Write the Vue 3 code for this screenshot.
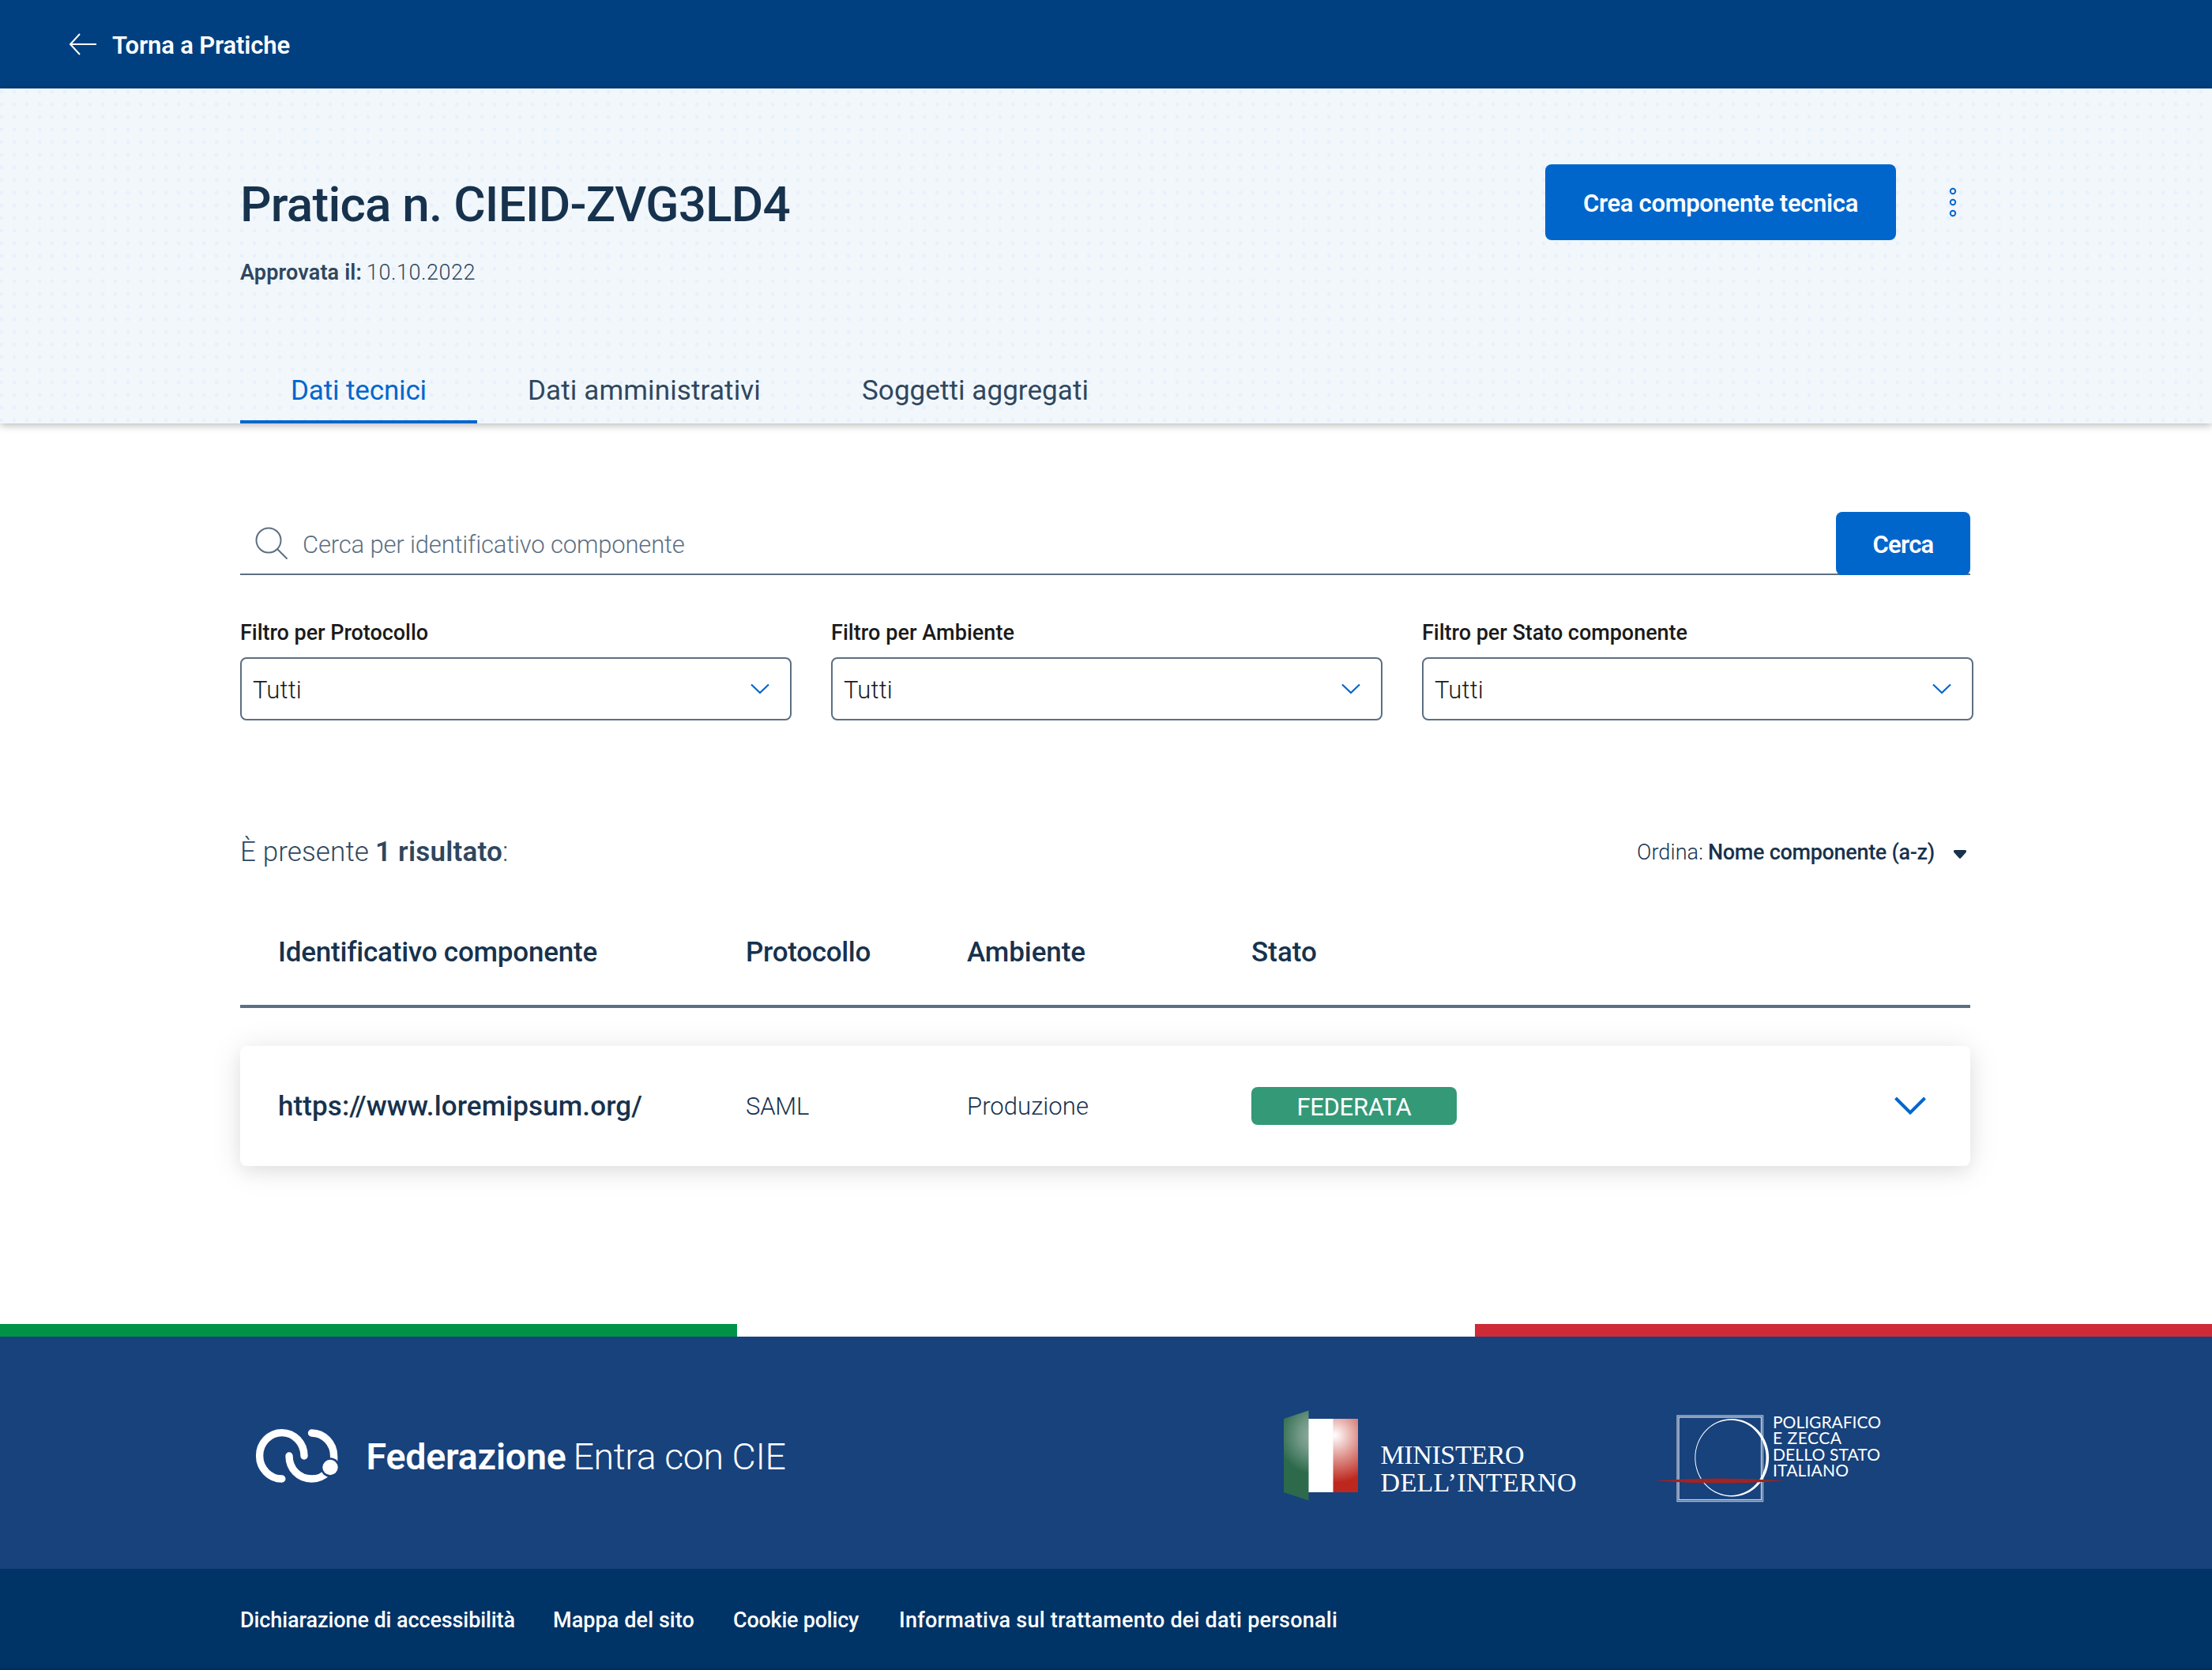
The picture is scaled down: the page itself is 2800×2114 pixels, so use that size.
<script setup>
const tabs = [
  { label: 'Dati tecnici', width: 172, active: true },
  { label: 'Dati amministrativi', width: 295 },
  { label: 'Soggetti aggregati', width: 287 },
]
const filters = [
  { label: 'Filtro per Protocollo', width: 238 },
  { label: 'Filtro per Ambiente', width: 232 },
  { label: 'Filtro per Stato componente', width: 336 },
]
const columns = [
  { label: 'Identificativo componente', width: 403 },
  { label: 'Protocollo', width: 158 },
  { label: 'Ambiente', width: 150 },
  { label: 'Stato', width: 83 },
]
const links = [
  { label: 'Dichiarazione di accessibilità', width: 348, gap: 48 },
  { label: 'Mappa del sito', width: 179, gap: 49 },
  { label: 'Cookie policy', width: 159, gap: 51 },
  { label: 'Informativa sul trattamento dei dati personali', width: 555, gap: 0 },
]

// Tracks a text so that it fills the given width: measured at two spacings, then solved linearly.
const vFit = {
  mounted(el, { value }) {
    el.style.display = 'inline-block'
    el.style.whiteSpace = 'nowrap'
    el.style.letterSpacing = '0px'
    const base = el.getBoundingClientRect().width
    el.style.letterSpacing = '1px'
    const step = el.getBoundingClientRect().width - base
    el.style.letterSpacing = `${(value - base) / step}px`
  },
}
</script>

<template>
  <div class="page">
    <nav class="topbar">
      <svg class="arrow" width="36" height="28" viewBox="0 0 36 28">
        <path d="M14 1 2 14 14 27M2 14H35" />
      </svg>
      <span v-fit="225">Torna a Pratiche</span>
    </nav>

    <header class="hero">
      <div class="hero-row">
        <div>
          <h1><span v-fit="696">Pratica n. CIEID-ZVG3LD4</span></h1>
          <p class="approved">
            <b v-fit="154">Approvata il:</b>
            <span v-fit="138">10.10.2022</span>
          </p>
        </div>
        <div class="actions">
          <button class="primary create"><span v-fit="348">Crea componente tecnica</span></button>
          <svg width="44" height="40" viewBox="0 0 44 40" class="dots">
            <circle cx="22" cy="6" r="3.2" />
            <circle cx="22" cy="20" r="3.2" />
            <circle cx="22" cy="34" r="3.2" />
          </svg>
        </div>
      </div>
      <div class="tabs">
        <div v-for="t in tabs" :key="t.label" class="tab" :class="{ active: t.active }">
          <span v-fit="t.width">{{ t.label }}</span>
        </div>
      </div>
    </header>

    <main class="content">
      <div class="search">
        <svg width="44" height="44" viewBox="0 0 44 44" class="lens">
          <circle cx="18" cy="18" r="15.5" />
          <path d="M29 29 41.5 41.5" />
        </svg>
        <span class="placeholder"><span v-fit="483">Cerca per identificativo componente</span></span>
        <button class="primary find"><span v-fit="77">Cerca</span></button>
      </div>

      <div class="filters">
        <div v-for="f in filters" :key="f.label" class="filter">
          <label><span v-fit="f.width">{{ f.label }}</span></label>
          <div class="select">
            <span v-fit="62">Tutti</span>
            <svg width="24" height="14" viewBox="0 0 24 14"><path d="M1 1.5 12 12 23 1.5" /></svg>
          </div>
        </div>
      </div>

      <div class="summary">
        <p class="count"><span v-fit="163">È presente</span><b v-fit="161">1 risultato</b>:</p>
        <p class="sort">
          <span v-fit="84">Ordina:</span><b v-fit="287">Nome componente (a-z)</b>
          <svg width="18" height="12" viewBox="0 0 18 12"><path d="M2 0H16Q18 1.2 16.6 3L9.9 10.4Q9 11.2 8.1 10.4L1.4 3Q0 1.2 2 0Z" /></svg>
        </p>
      </div>

      <div class="grid head">
        <div v-for="c in columns" :key="c.label"><span v-fit="c.width">{{ c.label }}</span></div>
      </div>

      <div class="grid card">
        <div class="url"><span v-fit="461">https:<i>/</i>/www.loremipsum.org/</span></div>
        <div><span v-fit="80">SAML</span></div>
        <div><span v-fit="154">Produzione</span></div>
        <div><div class="badge"><span v-fit="145">FEDERATA</span></div></div>
        <svg width="40" height="24" viewBox="0 0 40 24" class="expand"><path d="M1.5 2 20 20.5 38.5 2" /></svg>
      </div>
    </main>

    <footer>
      <div class="flag"><i class="green"></i><i></i><i class="red"></i></div>
      <div class="brands">
        <svg width="106" height="72" viewBox="0 0 106 72" class="cie">
          <g fill="none" stroke="#fff" stroke-width="9.4" stroke-linecap="round">
            <path d="M62 36A28.2 29.2 0 1 0 33.8 65" />
            <path d="M43 36C43 52 55 65 71.500 65Q84 65 92 56" />
            <path d="M71.500 7A28.400 29.200 0 0 1 99.600 36V44" />
          </g>
          <circle cx="95" cy="50.500" r="12.200" fill="#17427c" />
          <circle cx="95" cy="50.500" r="9.700" fill="#fff" />
        </svg>
        <p class="brand"><b v-fit="253">Federazione</b><span v-fit="269">Entra con CIE</span></p>

        <svg width="374" height="118" viewBox="0 0 374 118" class="interno">
          <defs>
            <radialGradient id="glow-green" gradientUnits="userSpaceOnUse" cx="42" cy="32" r="50">
              <stop offset="0" stop-color="#9cb5a9" />
              <stop offset=".45" stop-color="#719886" />
              <stop offset="1" stop-color="#2d6a4b" />
            </radialGradient>
            <radialGradient id="glow-red" gradientUnits="userSpaceOnUse" cx="65" cy="32" r="60">
              <stop offset="0" stop-color="#fff" />
              <stop offset=".5" stop-color="#dd8f89" />
              <stop offset="1" stop-color="#bd271d" />
            </radialGradient>
          </defs>
          <path d="M31 11H94V104H31Z" fill="#fff" />
          <path d="M62.500 11H94V104H62.500Z" fill="url(#glow-red)" />
          <path d="M0 11 31.500 .5V114.500L0 104Z" fill="url(#glow-green)" />
          <g class="serif">
            <text x="122.500" y="67.500" textLength="182" lengthAdjust="spacing">MINISTERO</text>
            <text x="122.500" y="103" textLength="248" lengthAdjust="spacing">DELL’INTERNO</text>
          </g>
        </svg>

        <svg width="290" height="112" viewBox="0 0 290 112" class="ipzs">
          <g fill="none" stroke="#fff">
            <rect x="28" y="2" width="108.500" height="108.500" stroke-width="1.500" stroke-opacity=".6" />
            <rect x="30" y="4" width="104.500" height="104.500" stroke-width="1.300" stroke-opacity=".8" />
          </g>
          <path fill="#fff" fill-rule="evenodd" d="M50.300 55.300A46.900 49.300 0 1 1 144.100 55.300A46.900 49.300 0 1 1 50.300 55.300ZM51.300 55.300A44.600 47.600 0 1 0 140.500 55.300A44.600 47.600 0 1 0 51.300 55.300Z" />
          <path d="M0 84.500Q82 78.500 164 84.500Q82 90.500 0 84.500Z" fill="#9f2424" />
          <g class="humanist">
            <text x="149" y="18" textLength="137" lengthAdjust="spacing">POLIGRAFICO</text>
            <text x="149" y="38.200" textLength="87" lengthAdjust="spacing">E ZECCA</text>
            <text x="149" y="58.600" textLength="136" lengthAdjust="spacing">DELLO STATO</text>
            <text x="149" y="79" textLength="96" lengthAdjust="spacing">ITALIANO</text>
          </g>
        </svg>
      </div>
      <div class="links">
        <a v-for="l in links" :key="l.label" :style="{ marginRight: l.gap + 'px' }"><span v-fit="l.width">{{ l.label }}</span></a>
      </div>
    </footer>
  </div>
</template>

<style>
body { margin: 0; background: #fff; }
</style>

<style scoped>
.page {
  width: 2800px;
  height: 2114px;
  overflow: hidden;
  display: flex;
  flex-direction: column;
  font-family: Roboto, "Open Sans", sans-serif;
  font-weight: 300;
  font-size: 31px;
  line-height: 40px;
  color: #17324d;
}
h1, p { margin: 0; }
b { font-weight: 600; }
svg { display: block; flex: none; }
button { border: 0; padding: 0; font: inherit; }

.topbar {
  box-sizing: border-box;
  height: 112px;
  padding: 4px 0 0 87px;
  display: flex;
  align-items: center;
  background: #004080;
  color: #fff;
  font-weight: 600;
}
.arrow { margin: -4px 19px 0 0; fill: none; stroke: #fff; stroke-width: 2; }

.hero {
  box-sizing: border-box;
  position: relative;
  height: 424px;
  padding: 0 306px 0 304px;
  display: flex;
  flex-direction: column;
  justify-content: space-between;
  background: radial-gradient(circle at 2px 4px, #e8f1fb 0 2px, transparent 3px) 0 0 / 16px 16px, #f2f7fc;
  box-shadow: 0 2px 10px rgba(0, 0, 0, .3);
}
.hero-row { display: flex; justify-content: space-between; padding-top: 96px; }
h1 { margin-top: 11px; font-size: 62px; line-height: 80px; font-weight: 500; }
.approved { display: flex; gap: 6px; margin-top: 26px; font-size: 27px; color: #2f475e; }
.actions { display: flex; align-items: flex-start; gap: 50px; }
.primary {
  display: flex;
  align-items: center;
  justify-content: center;
  border-radius: 8px;
  background: #0066cc;
  color: #fff;
  font-weight: 600;
  padding-top: 4px;
  box-sizing: border-box;
}
.create { width: 444px; height: 96px; }
.dots { margin-top: 28px; fill: #fff; stroke: #0066cc; stroke-width: 2; }
.tabs { display: flex; }
.tab {
  box-sizing: border-box;
  height: 84px;
  padding: 6px 64px 0;
  display: flex;
  align-items: center;
  border-bottom: 4px solid transparent;
  font-size: 35px;
  font-weight: 400;
  color: #2f475e;
}
.tab.active { color: #0066cc; border-color: #0066cc; }

.content { height: 1140px; padding: 112px 306px 0 304px; box-sizing: border-box; }
.search {
  display: flex;
  align-items: center;
  height: 80px;
  box-shadow: inset 0 -2px #5c6f82;
}
.lens { margin: 0 17px 0 18px; fill: none; stroke: #5c6f82; stroke-width: 2; }
.placeholder { flex: 1; padding-top: 4px; color: #5c6f82; }
.find { width: 170px; height: 80px; }

.filters { display: flex; gap: 50px; margin-top: 53px; width: 2194px; }
.filter { flex: 1; }
.filter label { display: block; font-size: 27px; font-weight: 500; color: #1a1a1a; }
.select {
  box-sizing: border-box;
  height: 80px;
  margin-top: 11px;
  padding: 3px 26px 0 14px;
  display: flex;
  align-items: center;
  justify-content: space-between;
  border: 2px solid #5c6f82;
  border-radius: 8px;
  color: #1a1a1a;
}
.select svg { margin-top: -3px; fill: none; stroke: #0066cc; stroke-width: 2.2; }

.summary { display: flex; justify-content: space-between; margin-top: 147px; }
.count { display: flex; font-size: 35px; color: #2f475e; }
.count span { margin-right: 8px; }
.sort { display: flex; font-size: 27px; }
.sort span { margin-right: 6px; }
.sort b { font-weight: 500; }
.sort svg { margin: 17px 4px 0 23px; fill: #17324d; }

.grid {
  display: grid;
  grid-template-columns: 592px 280px 360px 1fr 40px;
  align-items: center;
  padding: 0 56px 0 48px;
}
.head { margin-top: 87px; height: 86px; align-items: start; border-bottom: 4px solid #5c6f82; font-size: 35px; font-weight: 500; }
.card {
  margin-top: 48px;
  height: 152px;
  border-radius: 8px;
  background: #fff;
  box-shadow: 0 4px 40px rgba(0, 0, 0, .1), 0 8px 20px rgba(0, 0, 0, .05);
}
.card > div > span { position: relative; top: 1px; }
.url { font-size: 35px; font-weight: 500; }
.url i { font-style: normal; letter-spacing: -6px; }
.badge {
  width: 260px;
  height: 48px;
  display: flex;
  align-items: center;
  justify-content: center;
  border-radius: 8px;
  background: #339977;
  color: #fff;
  font-weight: 400;
}
.badge span { margin-top: 3px; }
.expand { fill: none; stroke: #0066cc; stroke-width: 4; }

.flag { display: flex; height: 16px; }
.flag i { flex: 1; }
.green { background: #009246; }
.red { background: #ce2b37; }
.brands { display: flex; height: 294px; background: #17427c; color: #fff; }
.cie { margin: 115px 0 0 322.500px; }
.brand { display: flex; gap: 9px; margin: 122px 0 0 35px; font-size: 46.500px; line-height: 60px; }
.interno { margin: 93px 0 0 630.500px; }
.ipzs { margin: 98px 0 0 96px; overflow: visible; }
.serif { font: 400 34px "Liberation Serif", serif; fill: #fff; }
.humanist { font: 400 21px/1 Lato, sans-serif; fill: #fff; }
.links {
  box-sizing: border-box;
  height: 128px;
  padding: 3px 0 0 304px;
  display: flex;
  align-items: center;
  background: #003366;
  border-bottom: 2px solid #002b57;
  color: #fff;
  font-size: 27px;
  font-weight: 500;
}
</style>
